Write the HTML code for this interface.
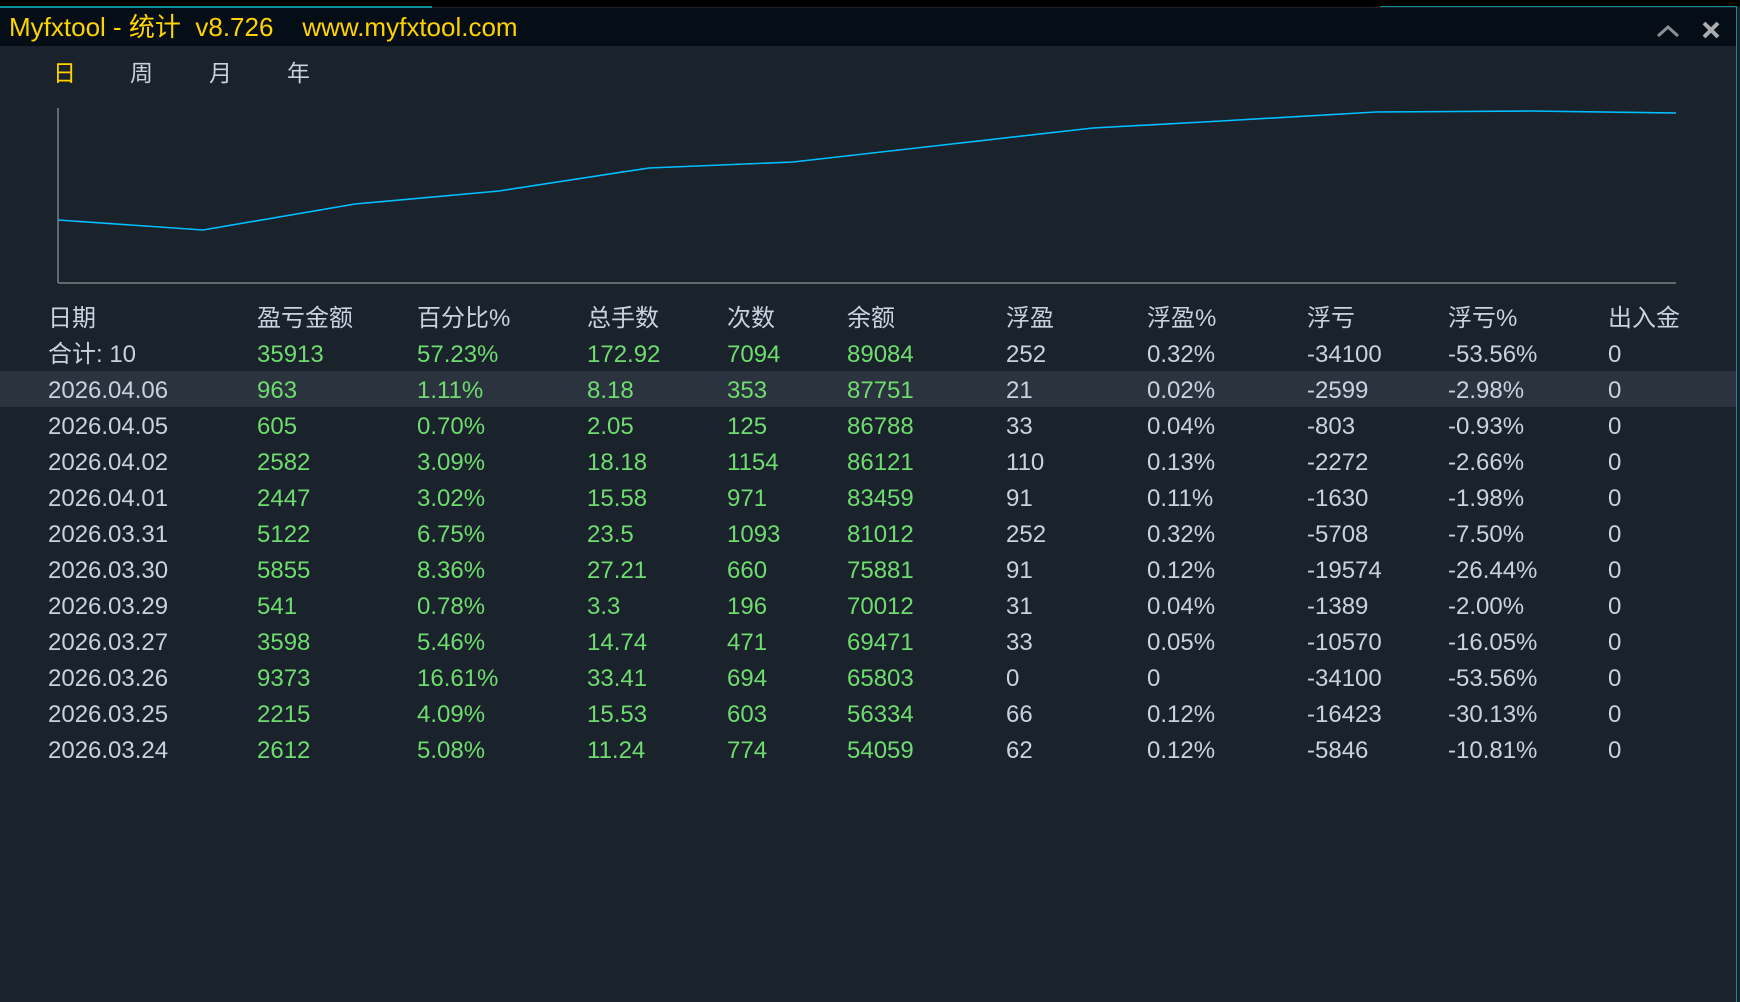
<!DOCTYPE html>
<html><head><meta charset="utf-8">
<style>
html,body{margin:0;padding:0;}
body{width:1740px;height:1002px;background:#1a222c;position:relative;overflow:hidden;font-family:"Liberation Sans","Noto Sans CJK SC",sans-serif;}
.top{position:absolute;left:0;top:0;width:1740px;height:7px;background:#000;}
.tl{position:absolute;left:0;top:6px;width:432px;height:2px;background:#0e8f98;}
.tr{position:absolute;left:1380px;top:6px;width:357px;height:1px;background:#0e8f98;}
.rb{position:absolute;left:1736px;top:6px;width:1px;height:996px;background:#0e8f98;}
.bar{position:absolute;left:0;top:8px;width:1736px;height:38px;background:#050e16;}
.title{position:absolute;left:9px;top:10px;font-size:26px;color:#ffd200;white-space:pre;line-height:34px;}
.tab{position:absolute;top:58px;font-size:23px;color:#c8d0dc;line-height:30px;}
.t{position:absolute;font-size:24px;line-height:30px;white-space:nowrap;color:#c8d2e0;}
.g{color:#6edc6e;}
.hl{position:absolute;left:0;top:371px;width:1736px;height:36px;background:#2b333e;}
</style></head><body>
<div class="top"></div><div class="tl"></div><div class="tr"></div>
<div class="bar"></div>
<div class="title">Myfxtool - 统计  v8.726    www.myfxtool.com</div>
<svg style="position:absolute;left:1655px;top:18px" width="80" height="24">
<polyline points="3,18 13,9 23,18" fill="none" stroke="#8a8f94" stroke-width="3"/>
<path d="M49,5 L63,19 M63,5 L49,19" stroke="#a9adb0" stroke-width="4"/>
</svg>
<div class="rb"></div>
<div class="tab" style="left:53px;color:#ffd200">日</div>
<div class="tab" style="left:130px">周</div>
<div class="tab" style="left:209px">月</div>
<div class="tab" style="left:287px">年</div>
<svg style="position:absolute;left:0;top:0" width="1740" height="300">
<line x1="58" y1="108" x2="58" y2="283" stroke="#7a7f84" stroke-width="1.5"/>
<line x1="58" y1="283" x2="1676" y2="283" stroke="#7a7f84" stroke-width="1.5"/>
<polyline fill="none" stroke="#00bfff" stroke-width="1.6" points="58,220 203,230 355,204 499,191 649,168 793,162 943,145 1093,128 1221,121 1376,112 1531,111 1676,113"/>
</svg>
<div class="hl"></div>
<div id="tbl"></div>
<script>
var cols=[48,257,417,587,727,847,1006,1147,1307,1448,1608];
var rows=[
["日期","盈亏金额","百分比%","总手数","次数","余额","浮盈","浮盈%","浮亏","浮亏%","出入金"],
["合计: 10","35913","57.23%","172.92","7094","89084","252","0.32%","-34100","-53.56%","0"],
["2026.04.06","963","1.11%","8.18","353","87751","21","0.02%","-2599","-2.98%","0"],
["2026.04.05","605","0.70%","2.05","125","86788","33","0.04%","-803","-0.93%","0"],
["2026.04.02","2582","3.09%","18.18","1154","86121","110","0.13%","-2272","-2.66%","0"],
["2026.04.01","2447","3.02%","15.58","971","83459","91","0.11%","-1630","-1.98%","0"],
["2026.03.31","5122","6.75%","23.5","1093","81012","252","0.32%","-5708","-7.50%","0"],
["2026.03.30","5855","8.36%","27.21","660","75881","91","0.12%","-19574","-26.44%","0"],
["2026.03.29","541","0.78%","3.3","196","70012","31","0.04%","-1389","-2.00%","0"],
["2026.03.27","3598","5.46%","14.74","471","69471","33","0.05%","-10570","-16.05%","0"],
["2026.03.26","9373","16.61%","33.41","694","65803","0","0","-34100","-53.56%","0"],
["2026.03.25","2215","4.09%","15.53","603","56334","66","0.12%","-16423","-30.13%","0"],
["2026.03.24","2612","5.08%","11.24","774","54059","62","0.12%","-5846","-10.81%","0"]];
var h="";
rows.forEach(function(r,i){var y=304+i*36;r.forEach(function(c,j){var g=(i>0&&j>=1&&j<=5)?" g":"";h+='<div class="t'+g+'" style="left:'+cols[j]+'px;top:'+y+'px">'+c+'</div>';});});
document.getElementById("tbl").innerHTML=h;
</script>
</body></html>
